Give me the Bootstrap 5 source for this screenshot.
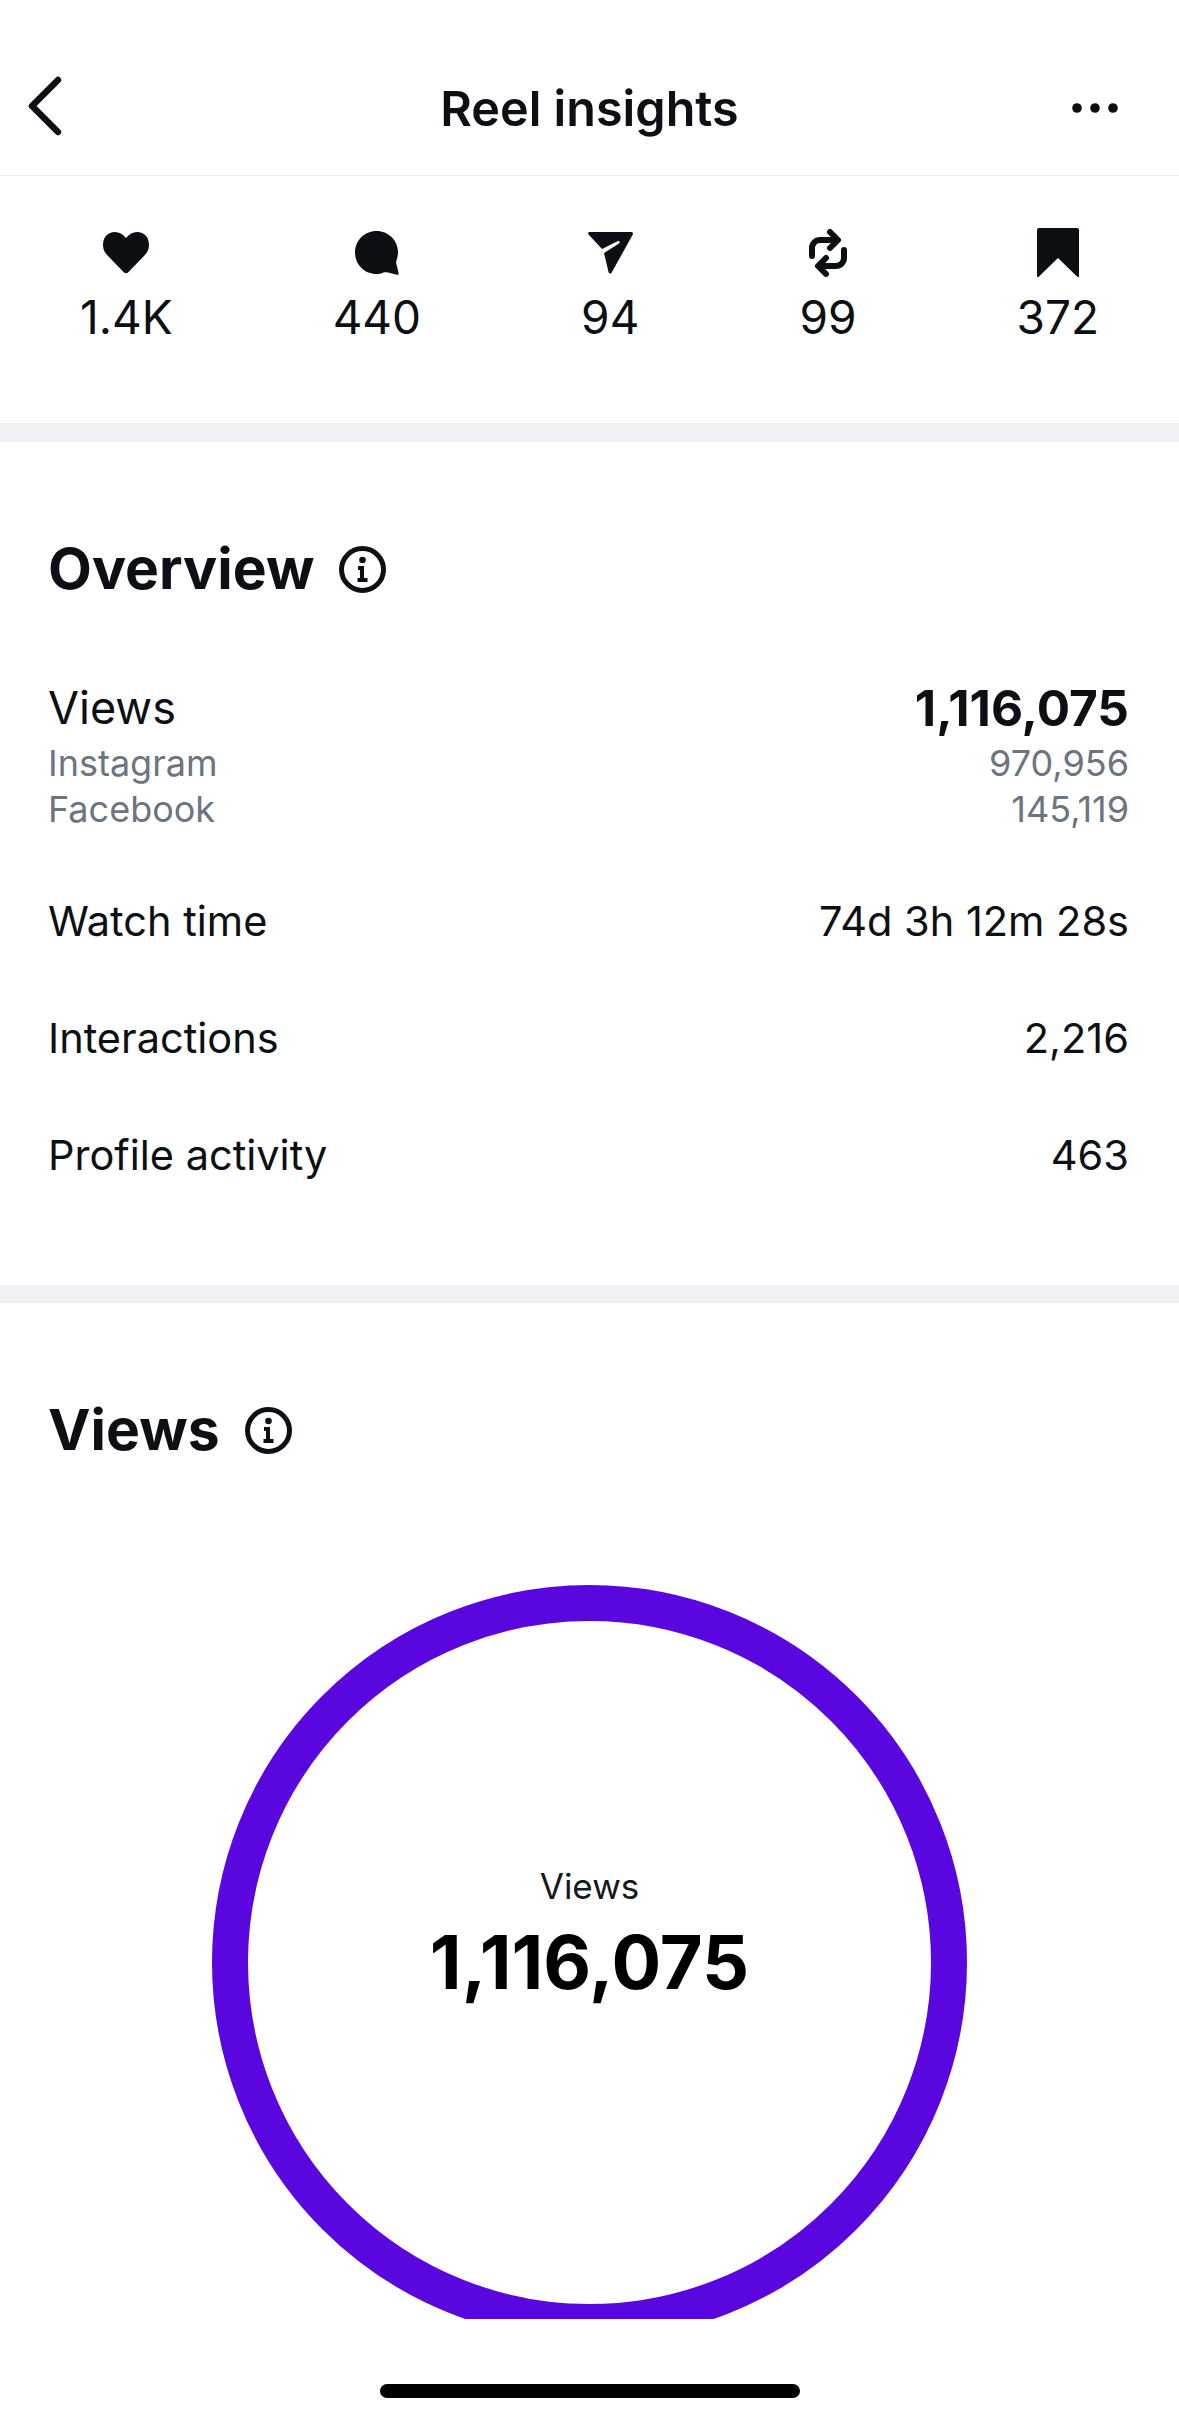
<!DOCTYPE html>
<html lang="en"><head><meta charset="utf-8">
<title>Reel insights</title>
<link href="https://cdn.jsdelivr.net/npm/bootstrap@5.3.0/dist/css/bootstrap.min.css" rel="stylesheet">
<style>
html,body{margin:0;background:#fff}
body{font-family:Inter,"Liberation Sans",sans-serif;color:#0c1014;height:2422px;overflow:hidden}
.app-top{height:176px;padding:76px 61px 0 28px;border-bottom:1px solid #ebedf0;position:relative}
.app-title{font-size:48.5px;font-weight:600;line-height:58px;position:absolute;left:0;right:0;top:80px;text-align:center;margin:0}
.dots-ico{margin-top:27px}
.stat-strip{height:247px;padding:52px 80px 0}
.stat-val{font-size:46px;line-height:56px;margin-top:11px}
.stat-ico{height:50px}
.band{height:18px;background:#eff1f5}
.band-first{height:19px}
.sect{padding:0 50px 0 48px}
.sect-head{font-size:57px;font-weight:700;line-height:70px;margin:0}
.sect-a{height:843px}
.head-ov{padding-top:92px;height:240px}
.head-vw{padding-top:92px;height:193px}
.info-ico{margin-top:12px;margin-left:9px}
.ov-main{font-size:45px;line-height:52px;margin-bottom:6px}
.ov-big{font-size:49.500px;font-weight:700}
.ov-sub{font-size:36px;line-height:46px;color:#6b7480}
.ov-row{font-size:41.500px;line-height:50px;margin-top:67px}
.ov-row-first{margin-top:64px}
.ring-clip{height:734px;overflow:hidden;margin-top:89px}
.ring{width:755px;height:755px;border:36px solid #5a06df;border-radius:50%;padding-bottom:55px}
.ring-lbl{font-size:35px;line-height:40px;color:#15181c;margin-bottom:15px}
.ring-num{font-size:73.800px;font-weight:700;line-height:84px;color:#000}
.home-bar{width:420px;height:14px;border-radius:7px;background:#000;margin:65px auto 0}
</style></head>
<body>
<header class="app-top d-flex justify-content-between align-items-start">
<svg width="34" height="60" viewBox="0 0 34 60"><path d="M30 4 4 30l26 26" fill="none" stroke="#0c1014" stroke-width="6.500" stroke-linecap="round" stroke-linejoin="round"/></svg>
<h1 class="app-title">Reel insights</h1>
<svg width="46" height="10" viewBox="0 0 46 10" class="dots-ico"><circle cx="5" cy="5" r="4.800" fill="#0c1014"/><circle cx="23" cy="5" r="4.800" fill="#0c1014"/><circle cx="41" cy="5" r="4.800" fill="#0c1014"/></svg>
</header>
<section class="stat-strip d-flex justify-content-between text-center">
<div><div class="stat-ico d-flex justify-content-center align-items-center"><svg width="46" height="42" viewBox="0 0 46 42"><path d="M23 6C20 2 16 0 12 0 5 0 0 5 0 13c0 5 2 8 6 12l15 15.500q2 1.500 4 0L40 25c4-4 6-7 6-12C46 5 41 0 34 0 30 0 26 2 23 6Z" fill="#0c1014"/></svg></div><div class="stat-val">1.4K</div></div>
<div><div class="stat-ico d-flex justify-content-center align-items-center"><svg width="44" height="44" viewBox="0 0 44 44"><path d="M21.500 0C33 0 43 9 43 21c0 3-.5 6-1.500 8.500-.5 1.500-.5 2 0 4l2 8c.5 2 -.5 2.500-2.500 2l-8-2c-2-.5-3-.5-4.500 0-2.500 1-4.500 1.500-7 1.500C9.500 43 0 33.500 0 21.500S9.500 0 21.500 0Z" fill="#0c1014"/></svg></div><div class="stat-val">440</div></div>
<div><div class="stat-ico d-flex justify-content-center align-items-center"><svg width="45" height="42" viewBox="0 0 45 42"><path d="M2 0h41c2 0 2.500 1.500 1.500 3L24 40c-1 2-3 2-3.500 0L16 21l15-9.500c1.500-1 .5-3-1-2.500L14 17 1 3C-.5 1.500 0 0 2 0Z" fill="#0c1014"/></svg></div><div class="stat-val">94</div></div>
<div><div class="stat-ico d-flex justify-content-center align-items-center"><svg width="38" height="48" viewBox="0 0 38 48" fill="none" stroke="#0c1014" stroke-width="6" stroke-linecap="round" stroke-linejoin="round"><path d="M3 27v-8a8 8 0 0 1 8-8h17M21 3l8 8-8 8M35 21v8a8 8 0 0 1-8 8H10M17 29l-8 8 8 8"/></svg></div><div class="stat-val">99</div></div>
<div><div class="stat-ico d-flex justify-content-center align-items-center"><svg width="42" height="50" viewBox="0 0 42 50"><path d="M2 0h38q2 0 2 2v46q0 2-2 .500L21 30 2 48.500Q0 50 0 48V2q0-2 2-2Z" fill="#0c1014"/></svg></div><div class="stat-val">372</div></div>
</section>
<div class="band band-first"></div>
<section class="sect sect-a">
<div class="head-ov d-flex align-items-start gap-3">
<h2 class="sect-head">Overview</h2>
<svg class="info-ico" width="47" height="47" viewBox="0 0 47 47"><circle cx="23.500" cy="23.500" r="21" fill="none" stroke="#0c1014" stroke-width="5"/><circle cx="23.500" cy="14" r="3.300" fill="#0c1014"/><path d="M19 20h6v12h3.500v4h-10v-4H21v-8h-2Z" fill="#0c1014"/></svg>
</div>
<div class="d-flex justify-content-between">
<div><div class="ov-main">Views</div><div class="ov-sub">Instagram</div><div class="ov-sub">Facebook</div></div>
<div class="text-end"><div class="ov-main ov-big">1,116,075</div><div class="ov-sub">970,956</div><div class="ov-sub">145,119</div></div>
</div>
<div class="ov-row ov-row-first d-flex justify-content-between"><span>Watch time</span><span>74d 3h 12m 28s</span></div>
<div class="ov-row d-flex justify-content-between"><span>Interactions</span><span>2,216</span></div>
<div class="ov-row d-flex justify-content-between"><span>Profile activity</span><span>463</span></div>
</section>
<div class="band"></div>
<section>
<div class="sect head-vw d-flex align-items-start gap-3">
<h2 class="sect-head">Views</h2>
<svg class="info-ico" width="47" height="47" viewBox="0 0 47 47"><circle cx="23.500" cy="23.500" r="21" fill="none" stroke="#0c1014" stroke-width="5"/><circle cx="23.500" cy="14" r="3.300" fill="#0c1014"/><path d="M19 20h6v12h3.500v4h-10v-4H21v-8h-2Z" fill="#0c1014"/></svg>
</div>
<div class="ring-clip d-flex justify-content-center">
<div class="ring d-flex flex-column align-items-center justify-content-center flex-shrink-0"><div class="ring-lbl">Views</div><div class="ring-num">1,116,075</div></div>
</div>
</section>
<div class="home-bar"></div>
<script src="https://cdn.jsdelivr.net/npm/bootstrap@5.3.0/dist/js/bootstrap.bundle.min.js"></script>
</body></html>
